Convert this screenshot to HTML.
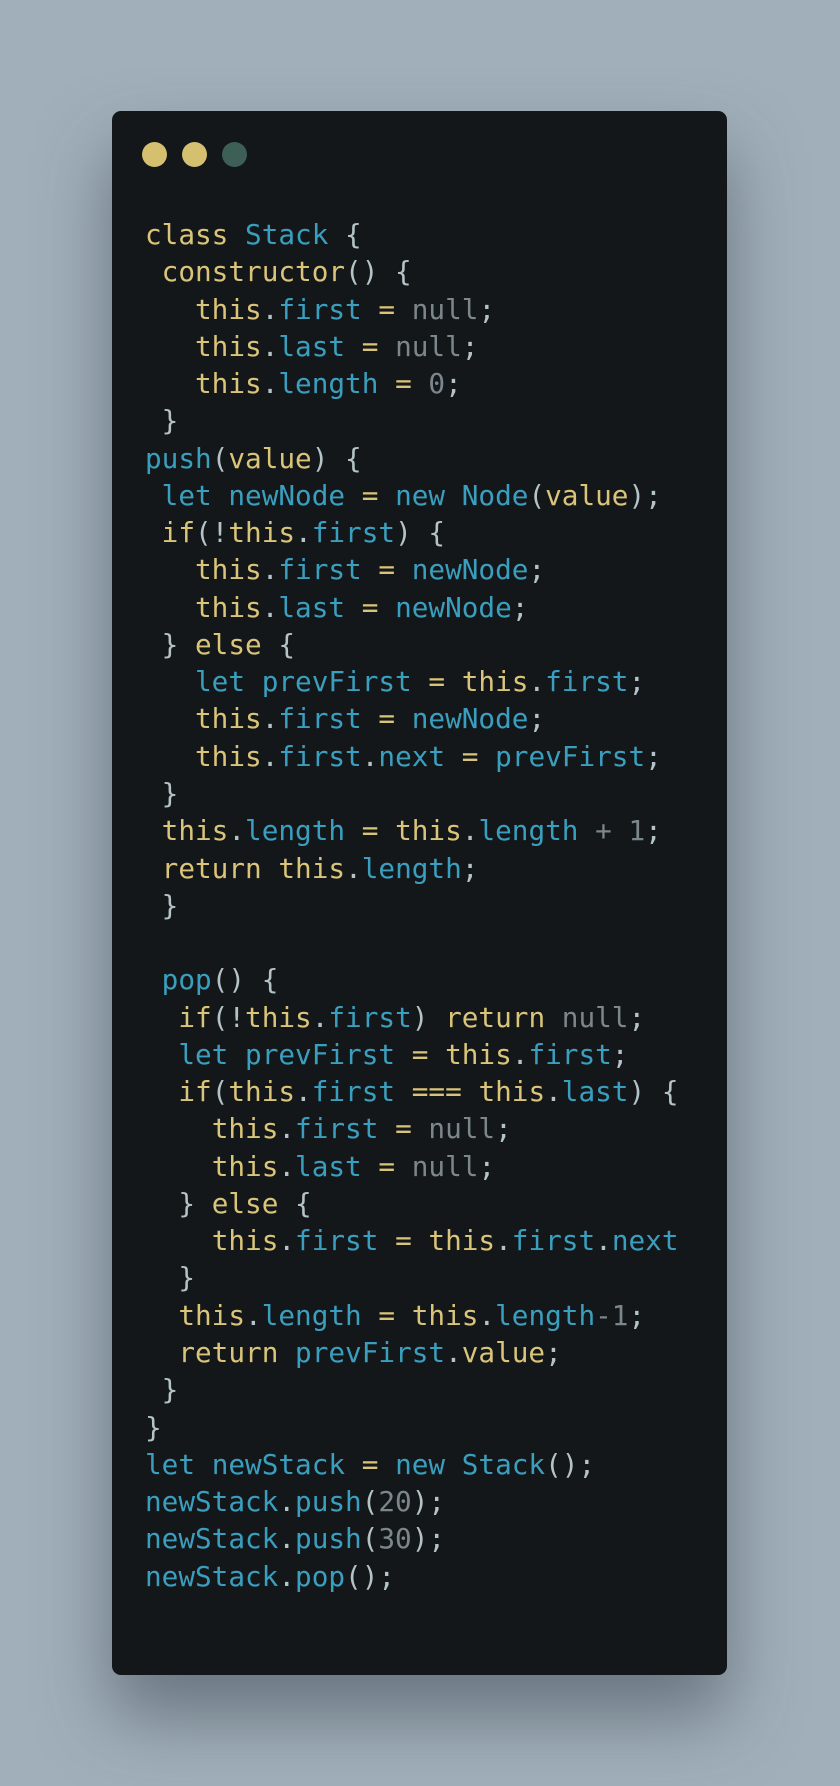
<!DOCTYPE html>
<html><head><meta charset="utf-8"><style>
html,body{margin:0;padding:0;}
body{width:840px;height:1786px;background:#a0afb9;position:relative;overflow:hidden;}
.card{position:absolute;left:112px;top:111px;width:615px;height:1564px;background:#141719;border-radius:9px;box-shadow:0 40px 70px rgba(60,70,80,0.55);}
.dot{position:absolute;top:142px;width:25px;height:25px;border-radius:50%;}
pre{position:absolute;left:145px;top:216px;margin:0;font-family:"DejaVu Sans Mono","Liberation Mono",monospace;font-size:27.7px;line-height:37.27px;color:#b4c3c8;}
.y{color:#d9c479}.c{color:#3a9fbf}.g{color:#7b878c}
</style></head><body>
<div class="card"></div>
<div class="dot" style="left:142px;background:#d4c06f"></div>
<div class="dot" style="left:182px;background:#d4c06f"></div>
<div class="dot" style="left:222px;background:#3d5f55"></div>
<pre><span class="y">class</span> <span class="c">Stack</span> {
 <span class="y">constructor</span>() {
   <span class="y">this</span>.<span class="c">first</span> <span class="y">=</span> <span class="g">null</span>;
   <span class="y">this</span>.<span class="c">last</span> <span class="y">=</span> <span class="g">null</span>;
   <span class="y">this</span>.<span class="c">length</span> <span class="y">=</span> <span class="g">0</span>;
 }
<span class="c">push</span>(<span class="y">value</span>) {
 <span class="c">let</span> <span class="c">newNode</span> <span class="y">=</span> <span class="c">new</span> <span class="c">Node</span>(<span class="y">value</span>);
 <span class="y">if</span>(!<span class="y">this</span>.<span class="c">first</span>) {
   <span class="y">this</span>.<span class="c">first</span> <span class="y">=</span> <span class="c">newNode</span>;
   <span class="y">this</span>.<span class="c">last</span> <span class="y">=</span> <span class="c">newNode</span>;
 } <span class="y">else</span> {
   <span class="c">let</span> <span class="c">prevFirst</span> <span class="y">=</span> <span class="y">this</span>.<span class="c">first</span>;
   <span class="y">this</span>.<span class="c">first</span> <span class="y">=</span> <span class="c">newNode</span>;
   <span class="y">this</span>.<span class="c">first</span>.<span class="c">next</span> <span class="y">=</span> <span class="c">prevFirst</span>;
 }
 <span class="y">this</span>.<span class="c">length</span> <span class="y">=</span> <span class="y">this</span>.<span class="c">length</span> <span class="g">+</span> <span class="g">1</span>;
 <span class="y">return</span> <span class="y">this</span>.<span class="c">length</span>;
 }

 <span class="c">pop</span>() {
  <span class="y">if</span>(!<span class="y">this</span>.<span class="c">first</span>) <span class="y">return</span> <span class="g">null</span>;
  <span class="c">let</span> <span class="c">prevFirst</span> <span class="y">=</span> <span class="y">this</span>.<span class="c">first</span>;
  <span class="y">if</span>(<span class="y">this</span>.<span class="c">first</span> <span class="y">===</span> <span class="y">this</span>.<span class="c">last</span>) {
    <span class="y">this</span>.<span class="c">first</span> <span class="y">=</span> <span class="g">null</span>;
    <span class="y">this</span>.<span class="c">last</span> <span class="y">=</span> <span class="g">null</span>;
  } <span class="y">else</span> {
    <span class="y">this</span>.<span class="c">first</span> <span class="y">=</span> <span class="y">this</span>.<span class="c">first</span>.<span class="c">next</span>
  }
  <span class="y">this</span>.<span class="c">length</span> <span class="y">=</span> <span class="y">this</span>.<span class="c">length</span><span class="g">-1</span>;
  <span class="y">return</span> <span class="c">prevFirst</span>.<span class="y">value</span>;
 }
}
<span class="c">let</span> <span class="c">newStack</span> <span class="y">=</span> <span class="c">new</span> <span class="c">Stack</span>();
<span class="c">newStack</span>.<span class="c">push</span>(<span class="g">20</span>);
<span class="c">newStack</span>.<span class="c">push</span>(<span class="g">30</span>);
<span class="c">newStack</span>.<span class="c">pop</span>();</pre>
</body></html>
